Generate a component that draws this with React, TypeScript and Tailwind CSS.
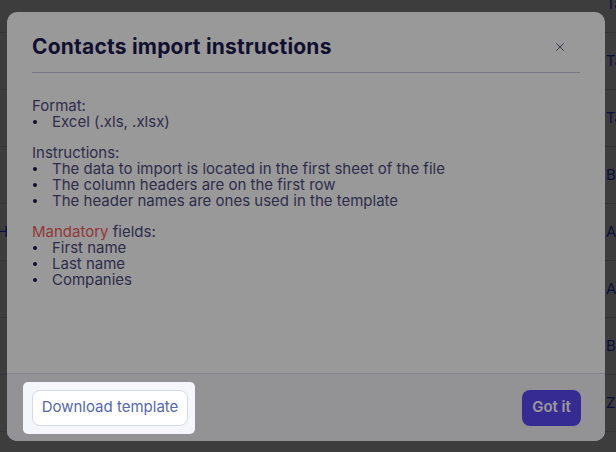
import { X } from 'lucide-react'

const rows = ['Ta', 'Ta', 'Ta', 'Bi', 'A', 'A', 'Bi', 'Zz']

function Section({
  title,
  items,
}: {
  title: React.ReactNode
  items: string[]
}) {
  return (
    <div>
      <p>{title}</p>
      <ul>
        {items.map((item) => (
          <li key={item} className="flex items-center">
            <span className="ml-[1px] mr-[15px] size-[4px] rounded-full bg-[#1d1a4f]" />
            {item}
          </li>
        ))}
      </ul>
    </div>
  )
}

export default function App() {
  return (
    <div
      className="relative h-[452px] w-[616px] overflow-hidden bg-white"
      style={{ fontFamily: 'Inter, "Noto Sans", sans-serif' }}
    >
      {/* page underneath */}
      <div className="-mt-[24px]">
        {rows.map((r, i) => (
          <div
            key={i}
            className="flex h-[57px] items-center justify-between border-b border-[#d9dbe6] text-[15px] text-[#3f3cff]"
          >
            <span className="-ml-[3px]">{i === 4 ? 'Head' : ''}</span>
            <span className="w-[10px] overflow-hidden whitespace-nowrap">
              {r}
            </span>
          </div>
        ))}
      </div>

      {/* modal backdrop */}
      <div className="absolute inset-0 bg-black/60 pl-[7px] pt-[12px]">
        <div className="flex h-[429px] w-[598px] flex-col rounded-[10px] bg-white">
          <div className="px-[25px] pt-[20px]">
            <div className="flex items-center justify-between border-b border-[#c9c8dc] pb-[10px]">
              <h2 className="text-[21px] font-bold leading-[30px] tracking-[0.2px] text-[#1d1a4f]">
                Contacts import instructions
              </h2>
              <button className="mr-[13px] text-[#4b5578]">
                <X size={14} strokeWidth={1.6} />
              </button>
            </div>
          </div>

          <div className="flex flex-1 flex-col gap-[15px] px-[25px] pt-[25px] text-[15px] leading-[16px] text-[#4f4c7e]">
            <Section title="Format:" items={['Excel (.xls, .xlsx)']} />
            <Section
              title="Instructions:"
              items={[
                'The data to import is located in the first sheet of the file',
                'The column headers are on the first row',
                'The header names are ones used in the template',
              ]}
            />
            <Section
              title={
                <>
                  <span className="text-[#f25e5e]">Mandatory</span> fields:
                </>
              }
              items={['First name', 'Last name', 'Companies']}
            />
          </div>

          <div className="flex h-[68px] items-center justify-between rounded-b-[10px] border-t border-[#dcdde6] bg-[#f5f6fb] pl-[25px] pr-[24px]">
            <div className="relative">
              <button className="h-[36px] w-[156px] rounded-[8px] border border-[#d3d9f0] bg-white text-[15px] text-[#5668b0]">
                Download template
              </button>
              {/* tour spotlight */}
              <div className="pointer-events-none absolute -left-[9px] -right-[7px] -inset-y-[8px] z-10 rounded-[5px] shadow-[0_0_0_9999px_rgba(0,0,0,0.4)]" />
            </div>
            <button className="h-[36px] w-[59px] rounded-[8px] bg-[#5b46f6] text-[15px] font-semibold text-white">
              Got it
            </button>
          </div>
        </div>
      </div>
    </div>
  )
}
